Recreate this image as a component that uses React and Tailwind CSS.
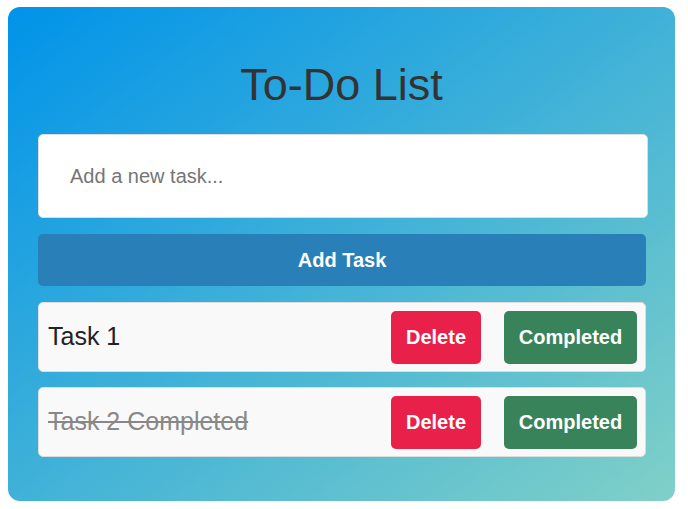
import React, { useState } from "react";

const initialTasks = [
  { id: 1, text: "Task 1", done: false },
  { id: 2, text: "Task 2 Completed", done: true },
];

const App = () => {
  const [tasks, setTasks] = useState(initialTasks);
  const [value, setValue] = useState("");

  const addTask = () => {
    if (!value.trim()) return;
    setTasks([...tasks, { id: Date.now(), text: value.trim(), done: false }]);
    setValue("");
  };

  const removeTask = (id) => setTasks(tasks.filter((t) => t.id !== id));
  const toggleTask = (id) =>
    setTasks(tasks.map((t) => (t.id === id ? { ...t, done: !t.done } : t)));

  return (
    <div className="min-h-screen bg-white pt-[7px] pl-2 font-['Liberation_Sans',Arial,sans-serif]">
      <div className="w-[667px] h-[494px] rounded-xl bg-linear-to-br/srgb from-[#0093E9] to-[#80D0C7] px-[30px] pt-[53px]">
        {/* Header */}
        <h1 className="text-center text-[45px] leading-[50px] text-[#333]">
          To-Do List
        </h1>

        <input
          type="text"
          value={value}
          onChange={(e) => setValue(e.target.value)}
          placeholder="Add a new task..."
          className="mt-[24px] block w-[610px] h-[84px] rounded-[5px] border border-[#ddd] bg-white pl-[31px] text-[20px] text-[#333] placeholder:text-[#757575] outline-none"
        />

        <button
          onClick={addTask}
          className="mt-[16px] block w-[608px] h-[52px] rounded-[5px] bg-[#2980b9] text-[20px] font-bold text-white"
        >
          Add Task
        </button>

        {/* Task list */}
        <ul className="mt-[16px] flex flex-col gap-[15px]">
          {tasks.map((task) => (
            <li
              key={task.id}
              className="flex items-center w-[608px] h-[70px] rounded-[5px] border border-[#ddd] bg-[#f9f9f9] pl-[9px] pr-[8px]"
            >
              <span
                className={`flex-1 text-[25px] ${
                  task.done ? "line-through text-[#888]" : "text-[#222]"
                }`}
              >
                {task.text}
              </span>
              <button
                onClick={() => removeTask(task.id)}
                className="h-[53px] w-[90px] rounded-[5px] bg-[#e8204a] text-[20px] font-bold text-white"
              >
                Delete
              </button>
              <button
                onClick={() => toggleTask(task.id)}
                className="ml-[23px] h-[53px] w-[133px] rounded-[5px] bg-[#38835a] text-[20px] font-bold text-white"
              >
                Completed
              </button>
            </li>
          ))}
        </ul>
      </div>
    </div>
  );
};

export default App;
